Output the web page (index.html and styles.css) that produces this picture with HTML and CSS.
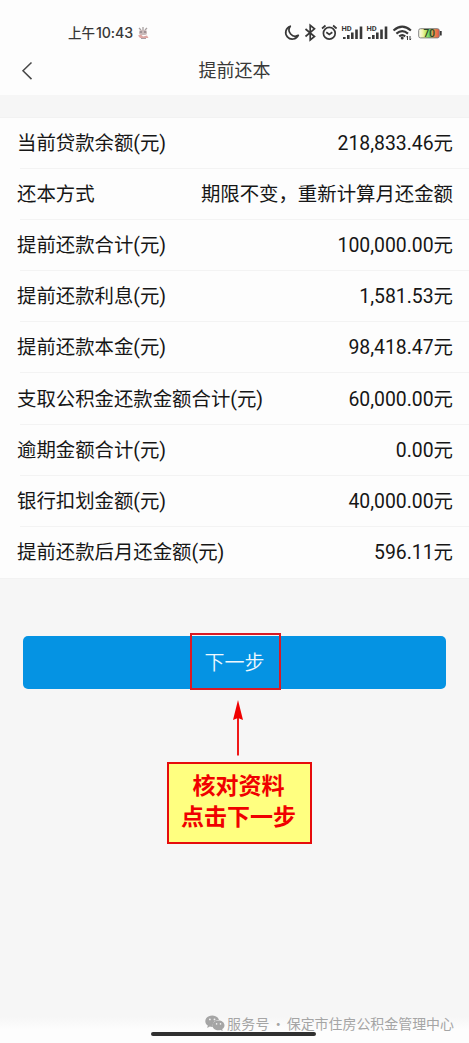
FILE: index.html
```html
<!DOCTYPE html>
<html lang="zh-CN">
<head>
<meta charset="utf-8">
<title>提前还本</title>
<link rel="stylesheet" href="styles.css">
</head>
<body>
<div class="screen">
  <header class="top">
    <div class="status">
      <span class="time">上午<span class="clock">10:43</span></span>
      <svg class="rabbit" width="12" height="14" viewBox="0 0 12 14" fill="none">
        <path d="M2 2l2 2M6 1l0 3M10 2l-2 2" stroke="#a8a0a0" stroke-width="1.3"/>
        <rect x="2" y="4" width="8" height="5" rx="2" fill="#c9b9b9"/>
        <path d="M3 6h2M7 6h2" stroke="#776a70" stroke-width="1.2"/>
        <path d="M1 9.500l3-1 2 2 4-1 1.500 2.500H3z" fill="#dda6a2"/>
        <path d="M4 12.500h5" stroke="#a99ca4" stroke-width="1"/>
      </svg>
      <svg class="icons" width="160" height="20" viewBox="284 23 160 20" fill="none" stroke="#383838">
        <path d="M290.300 26.200a6.600 6.600 0 1 0 8 9.100 6.200 6.200 0 0 1-8-9.100z" stroke-width="1.700" stroke-linejoin="round"/>
        <path d="M305.500 29l9 7.500-4.300 3.500V25.300l4.300 3.500-9 7.700" stroke-width="1.700"/>
        <circle cx="329.300" cy="33.200" r="5.900" stroke-width="1.700"/>
        <path d="M322 28.500l3.500-3M336.600 28.500l-3.500-3M326.300 32.300l3 2.200 3-2.200" stroke-width="1.700"/>
        <g id="signal">
          <text class="hd" x="341.500" y="31">HD</text>
          <path d="M344.300 37v2M348.300 35v4M352.300 32.500v6.500M356.500 29.500v9.500M361 26.500v12.500" stroke-width="2.600"/>
        </g>
        <use href="#signal" x="25"/>
        <path d="M393.500 30.500q8.700-7.600 17.400 0M396.400 33.600q5.800-5 11.600 0M399.200 36.400q3-2.500 6 0" stroke-width="2.100"/>
        <circle cx="402.200" cy="38" r="1.500" fill="#383838" stroke="none"/>
        <path d="M407.500 40v-4l-1 1.200M410 36v4l1-1.200" stroke-width="1"/>
        <defs>
          <linearGradient id="charge" x1="0" x2="1">
            <stop offset="0" stop-color="#fbfbf5"/><stop offset=".2" stop-color="#f0f3a8"/>
            <stop offset=".36" stop-color="#b9e85a"/><stop offset=".52" stop-color="#5fd070"/><stop offset=".7" stop-color="#f49a48"/><stop offset="1" stop-color="#e2564a"/>
          </linearGradient>
        </defs>
        <rect x="418.700" y="28.700" width="20.600" height="9.200" rx="1.800" fill="url(#charge)" stroke="#777" stroke-width=".9"/>
        <path d="M440.800 31v4.500" stroke-width="1.800"/>
        <text class="level" x="423.500" y="37">70</text>
      </svg>
    </div>
    <div class="nav">
      <svg class="back" width="14" height="20" viewBox="0 0 14 20"><path d="M11.500 1.500L3 9.800l8.500 8.300" fill="none" stroke="#484848" stroke-width="1.500"/></svg>
      <h1>提前还本</h1>
    </div>
  </header>
  <main>
    <dl class="list">
      <div class="row"><dt>当前贷款余额(元)</dt><dd>218,833.46元</dd></div>
      <div class="row"><dt>还本方式</dt><dd>期限不变，重新计算月还金额</dd></div>
      <div class="row"><dt>提前还款合计(元)</dt><dd>100,000.00元</dd></div>
      <div class="row"><dt>提前还款利息(元)</dt><dd>1,581.53元</dd></div>
      <div class="row"><dt>提前还款本金(元)</dt><dd>98,418.47元</dd></div>
      <div class="row"><dt>支取公积金还款金额合计(元)</dt><dd>60,000.00元</dd></div>
      <div class="row"><dt>逾期金额合计(元)</dt><dd>0.00元</dd></div>
      <div class="row"><dt>银行扣划金额(元)</dt><dd>40,000.00元</dd></div>
      <div class="row"><dt>提前还款后月还金额(元)</dt><dd>596.11元</dd></div>
    </dl>
    <div class="action">
      <button class="next" type="button">下一步</button>
      <span class="marker"></span>
    </div>
    <div class="hint">
      <svg width="12" height="56" viewBox="0 0 12 56"><path d="M6 18v37.500" stroke="#f00000" stroke-width="1.800"/><path d="M6 0l5 20-5-2-5 2z" fill="#f00000"/></svg>
      <p class="callout">核对资料<br>点击下一步</p>
    </div>
  </main>
  <footer class="bottom">
    <div class="account">
      <svg width="20" height="16" viewBox="0 0 20 16">
        <path d="M7.200.5C3.300.5.300 3 .300 6.200c0 1.800 1 3.400 2.500 4.400L2.200 13l2.600-1.400c.8.200 1.600.3 2.400.3h.6C7 8 9.700 4.900 14 4.900 13.300 2.300 10.500.5 7.200.5z" fill="#a5a5a5"/>
        <path d="M13.500 5.600c-3.400 0-6 2.100-6 4.800s2.600 4.800 6 4.800c.7 0 1.400-.1 2-.3l2.200 1.100-.5-1.900c1.400-.9 2.300-2.200 2.300-3.700 0-2.700-2.600-4.800-6-4.800z" fill="#a5a5a5"/>
        <g fill="#f2f2f2"><circle cx="4.900" cy="4.400" r=".9"/><circle cx="9.500" cy="4.400" r=".9"/><circle cx="11.600" cy="8.900" r=".8"/><circle cx="15.500" cy="8.900" r=".8"/></g>
      </svg>
      <span class="kind">服务号</span><span class="dot">·</span><span>保定市住房公积金管理中心</span>
    </div>
    <span class="home"></span>
  </footer>
</div>
</body>
</html>
```
FILE: styles.css
```css
* { box-sizing: border-box; }
body {
  margin: 0;
  background: #f6f6f6;
  color: #161616;
  font-family: Roboto, "Noto Sans CJK SC", sans-serif;
}
.screen { display: flex; flex-direction: column; height: 1043px; }
.top { height: 95px; background: #fdfdfd; }
.status { display: flex; align-items: center; height: 46px; padding: 20px 25px 0 68px; }
.time { margin-top: -1px; font-size: 13.5px; line-height: 20px; color: #383838; white-space: nowrap; font-weight: 500; font-family: "Noto Sans CJK SC", sans-serif; }
.clock { margin-left: 1px; font-size: 14.2px; letter-spacing: -0.1px; font-weight: 500; font-family: Inter, sans-serif; }
.rabbit { margin-left: 4px; }
.icons { margin-left: auto; }
.hd { font: 700 7.5px Roboto, sans-serif; fill: #383838; stroke: none; }
.level { font: 500 10px Roboto, sans-serif; fill: #294529; stroke: none; }
.nav { display: grid; grid-template-columns: 40px 1fr 40px; align-items: center; height: 49px; }
.back { margin-left: 20px; }
.nav h1 { margin: 0; text-align: center; font-size: 18px; line-height: 24px; font-weight: 400; color: #383838; }
.list { margin: 23px 0 0; background: #fdfdfd; box-shadow: 0 0 0 1px #f2f2f2; }
.row {
  display: flex;
  justify-content: space-between;
  align-items: center;
  height: 51.1px;
  padding: 1px 16px 0 17px;
  background: linear-gradient(#f3f3f3, #f3f3f3) 20px 100% / 100% 1px no-repeat;
  font-size: 19.4px;
  line-height: 28px;
  white-space: nowrap;
}
.row:last-child { background: none; }
.row dd { margin: 0; }
.action { position: relative; margin: 58px 23px 0; }
.next {
  display: block;
  width: 100%;
  height: 53px;
  padding: 0 0 2px;
  border: 0;
  border-radius: 5px;
  background: #0593e3;
  color: #eef8fe;
  font: 350 20px "Noto Sans CJK SC", sans-serif;
}
.marker { position: absolute; left: 167px; top: -3px; width: 91px; height: 57px; border: 2px solid #d91a24; }
.hint { display: flex; flex-direction: column; align-items: center; width: 145px; margin: 11px 0 0 167px; }
.hint svg { margin-right: 4px; }
.callout {
  width: 145px;
  height: 82px;
  margin: 6px 0 0;
  padding: 5px 2px 0 0;
  border: 2px solid #e60c0c;
  background: #ffff80;
  color: #f00000;
  font: 700 23px/31px "Noto Sans CJK SC", sans-serif;
  text-align: center;
}
.bottom { margin-top: auto; height: 33px; overflow: hidden; background: linear-gradient(#f6f6f6 20%, #fdfdfd 60%); }
.account { display: flex; align-items: center; height: 22px; margin: 2px 0 3px; padding-left: 205px; font: 13.95px/20px "Noto Sans CJK SC", sans-serif; color: #a5a5a5; white-space: nowrap; }
.kind { margin-left: 2px; letter-spacing: .3px; }
.dot { width: 17px; text-align: center; }
.home { display: block; width: 165px; height: 4px; margin: -5px 0 0 151px; border-radius: 2px; background: #303030; }
```
